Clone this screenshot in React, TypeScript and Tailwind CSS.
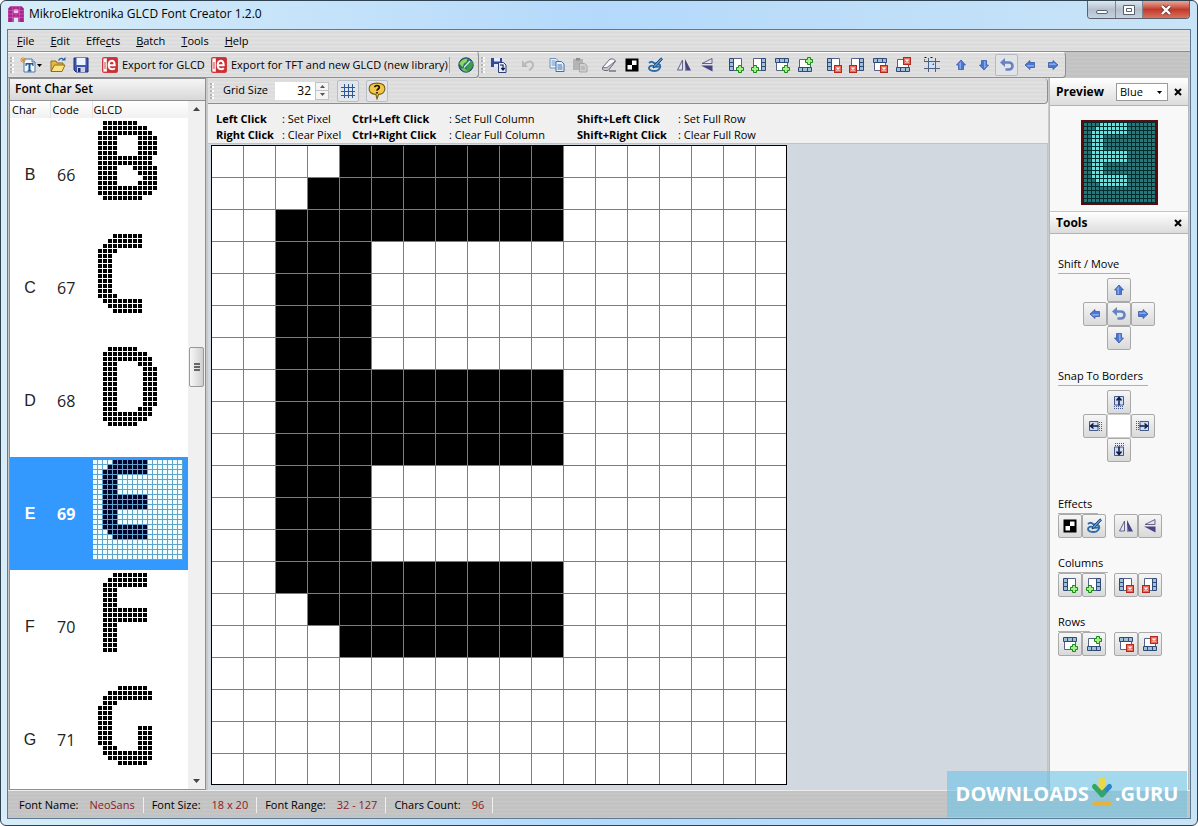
import type { ReactNode } from 'react';
import { useState } from 'react';
import clsx from 'clsx';

type Span = [number, number];
type Glyph = Span[][];

const rep = (n: number, row: Span[]): Glyph => Array.from({ length: n }, () => row);

// each row lists the filled column ranges, inclusive
const glyphB: Glyph = [
  [[2, 8]], [[2, 10]], [[1, 11]],
  ...rep(4, [[1, 4], [9, 12]]),
  ...rep(2, [[1, 11]]),
  [[1, 4], [8, 12]], [[1, 4], [9, 12]], [[1, 4], [10, 12]], [[1, 4], [9, 12]],
  [[1, 12]], [[1, 11]], [[2, 9]],
];
const glyphC: Glyph = [
  [[4, 9]], [[3, 9]], [[2, 9]], [[1, 4]],
  ...rep(8, [[1, 3]]),
  [[1, 4]], [[2, 9]], [[3, 9]], [[4, 9]],
];
const glyphD: Glyph = [
  [[3, 8]], [[2, 10]], [[2, 11]], [[2, 4], [9, 11]],
  ...rep(8, [[2, 4], [10, 12]]),
  [[2, 4], [9, 11]], [[2, 11]], [[2, 10]], [[3, 8]],
];
const glyphE: Glyph = [
  [[4, 10]], [[3, 10]], [[2, 10]],
  ...rep(4, [[2, 4]]),
  ...rep(3, [[2, 10]]),
  ...rep(3, [[2, 4]]),
  [[2, 10]], [[3, 10]], [[4, 10]],
];
const glyphF: Glyph = [
  [[4, 10]], [[3, 10]], [[2, 10]],
  ...rep(4, [[2, 4]]),
  ...rep(3, [[2, 10]]),
  ...rep(6, [[2, 4]]),
];
const glyphG: Glyph = [
  [[5, 10]], [[3, 11]], [[2, 11]], [[2, 4]],
  ...rep(4, [[1, 3]]),
  ...rep(4, [[1, 3], [9, 11]]),
  [[2, 4], [9, 11]], [[2, 11]], [[3, 11]], [[5, 10]],
];

const CHARS = [
  { char: 'B', code: 66, glyph: glyphB },
  { char: 'C', code: 67, glyph: glyphC },
  { char: 'D', code: 68, glyph: glyphD },
  { char: 'E', code: 69, glyph: glyphE },
  { char: 'F', code: 70, glyph: glyphF },
  { char: 'G', code: 71, glyph: glyphG },
];

const COLS = 18;
const ROWS = 20;
const METAL = 'bg-[repeating-linear-gradient(0deg,#e2e2e2_0,#e2e2e2_1px,#dadada_2px,#dedede_4px)]';

function isOn(glyph: Glyph, x: number, y: number) {
  return (glyph[y] ?? []).some(([a, b]) => x >= a && x <= b);
}

function Pixels({ glyph, size, on, off }: { glyph: Glyph; size: number; on: string; off?: string }) {
  const cells: ReactNode[] = [];
  for (let y = 0; y < ROWS; y++) {
    for (let x = 0; x < COLS; x++) {
      const fill = isOn(glyph, x, y) ? on : off;
      if (fill) {
        cells.push(<rect key={`${x}-${y}`} x={x * size} y={y * size} width={size - 1} height={size - 1} fill={fill} />);
      }
    }
  }
  return (
    <svg width={COLS * size} height={ROWS * size} shapeRendering="crispEdges" className="block" aria-hidden="true">
      {cells}
    </svg>
  );
}

function Editor({ glyph }: { glyph: Glyph }) {
  const s = 32;
  return (
    <svg width={COLS * s} height={ROWS * s} shapeRendering="crispEdges" className="block" aria-label="Glyph editor">
      <rect width={COLS * s} height={ROWS * s} fill="#fff" />
      {glyph.map((row, y) =>
        row.map(([a, b]) => <rect key={`${a}-${y}`} x={a * s} y={y * s} width={(b - a + 1) * s + 1} height={s + 1} fill="#000" />),
      )}
      {Array.from({ length: COLS - 1 }, (_, i) => (
        <rect key={`v${i}`} x={(i + 1) * s} y={0} width={1} height={ROWS * s} fill="#7d7d7d" />
      ))}
      {Array.from({ length: ROWS - 1 }, (_, i) => (
        <rect key={`h${i}`} x={0} y={(i + 1) * s} width={COLS * s} height={1} fill="#7d7d7d" />
      ))}
      <rect x={0.5} y={0.5} width={COLS * s - 1} height={ROWS * s - 1} fill="none" stroke="#000" />
    </svg>
  );
}

/* ---------- icons ---------- */

function Icon({ children, size = 16 }: { children: ReactNode; size?: number }) {
  return (
    <svg width={size} height={size} viewBox="0 0 16 16" className="block shrink-0" aria-hidden="true">
      {children}
    </svg>
  );
}

const AppIcon = () => (
  <Icon size={18}>
    <path d="M3 1h10l2 2v12h-5v-4H6v4H1V3z" fill="#a8228c" />
    <path d="M6 4h4v3H6z" fill="#f7c6ea" />
    <path d="M5 1v14M8 1v3M8 7v4M11 1v14M1 5h14M1 8h14M1 11h14" stroke="#d774c0" strokeWidth=".5" />
  </Icon>
);

const NewIcon = () => (
  <Icon>
    <path d="M4 2h8l3 3v10H4z" fill="#f2f7fd" stroke="#5377a6" />
    <path d="M12 2v3h3" fill="#c9dcf2" stroke="#5377a6" />
    <path d="M5.500 6h8v3h-1l-.5-1.500H10.500V13l1 .5v1h-4v-1l1-.5V7.500H7L6.500 9h-1z" fill="#1f5c96" />
    <path d="M3 0v6M0 3h6M1 1l4 4M5 1L1 5" stroke="#e08a2c" strokeWidth=".9" />
  </Icon>
);

const OpenIcon = () => (
  <Icon>
    <path d="M1 14V4h5l1 2h6v3" fill="#e7b93c" stroke="#8f6d12" />
    <path d="M1 14.500L4.500 8H15l-3 6.500z" fill="#fbe387" stroke="#8f6d12" />
    <path d="M8.500 3.500C10 .8 12.500.8 13.500 3" fill="none" stroke="#2d5fa5" strokeWidth="1.400" />
    <path d="M11.500 3.500h4V0z" fill="#2d5fa5" />
  </Icon>
);

const SaveIcon = () => (
  <Icon>
    <path d="M1 1h14v14H3l-2-2z" fill="#3f57b5" stroke="#1d2c70" />
    <rect x="3.500" y="1" width="9" height="7" fill="#eef3fd" />
    <rect x="4" y="10" width="8" height="5" fill="#c9d1e3" />
    <rect x="5" y="11" width="2.500" height="4" fill="#1d2c70" />
  </Icon>
);

// red badge with a light core and a white-on-red "e" mark
const ExportIcon = () => (
  <Icon>
    <rect x=".6" y=".6" width="14.800" height="14.800" rx="1.500" fill="#f6d5d5" stroke="#cf3a3e" strokeWidth="1.200" />
    <path d="M3 2v12" stroke="#fff" strokeWidth="2" />
    <path d="M3 5v7" stroke="#cf3a3e" strokeWidth="1" />
    <path d="M5 1h10v14H5z" fill="#cc2f35" />
    <path d="M6.800 8.300h5.900c0-3-1.200-4.600-2.900-4.600-1.900 0-3.100 1.800-3.100 4.400 0 2.700 1.300 4.200 3.400 4.200 1.100 0 2-.4 2.700-1.200" fill="none" stroke="#fff" strokeWidth="2" />
  </Icon>
);

const GlobeIcon = () => (
  <Icon>
    <circle cx="8" cy="8" r="7.200" fill="#2b6d8f" stroke="#1c4358" />
    <path d="M1.500 7c1-3.500 4.500-5.500 8-5.200L8.500 5 6 6.500 4.500 10z" fill="#8ed65c" />
    <path d="M9.500 8l4.500-4.500c1.500 3 1 6.500-1 8.500l-3 2.500-1.500-2z" fill="#3f9d49" />
    <path d="M3 11.500c2 3 5 3.500 7 3L6.500 11z" fill="#6fc457" />
    <path d="M6 10.500l6-6.500" stroke="#d5f5c5" strokeWidth="1.300" />
  </Icon>
);

const SaveCopyIcon = () => (
  <Icon>
    <path d="M0 1h11v9H0z" fill="#34499a" />
    <path d="M3 1h6v3.500H3zM3 7h5v3H3z" fill="#e4ebfa" />
    <path d="M7.500 5.500h5l2.500 2.500v7.500H7.500z" fill="#e4eefb" stroke="#2b3f78" />
    <path d="M9 8h3v4M10.300 11l1.700 2 1.700-2" fill="none" stroke="#111c44" strokeWidth="1.200" />
  </Icon>
);

const WrapIcon = () => (
  <Icon>
    <path d="M4.500 5.500H10a3.500 3.500 0 010 7H6.500" fill="none" stroke="#6583c0" strokeWidth="2.600" />
    <path d="M1 5.500l5-4.500v9z" fill="#6583c0" />
  </Icon>
);

const UndoIcon = () => (
  <Icon>
    <path d="M5 7c3-4 8-3 8 1 0 3-2 4-4 5" fill="none" stroke="#b9b9b9" strokeWidth="2" />
    <path d="M2 3v7h6z" fill="#b9b9b9" />
  </Icon>
);

const CopyIcon = () => (
  <Icon>
    <path d="M1 1.500h6l2 2V11H1z" fill="#eaf3fd" stroke="#6b91bd" />
    <path d="M2.500 4h4M2.500 6h5M2.500 8h5" stroke="#6b91bd" />
    <path d="M7 4.500h5.500L15 7v7.500H7z" fill="#eaf3fd" stroke="#3f6da5" />
    <path d="M8.500 8h4.500M8.500 10h5M8.500 12h5" stroke="#3f6da5" />
  </Icon>
);

const PasteIcon = () => (
  <Icon>
    <path d="M1 2h10v11H1z" fill="#b4b4b4" />
    <path d="M4 1h4v2.500H4z" fill="#8f8f8f" />
    <path d="M7.500 6.500h5l2.500 2V15H7.500z" fill="#d0d0d0" stroke="#a5a5a5" />
    <path d="M9 10h4M9 12h4" stroke="#a5a5a5" />
  </Icon>
);

const EraserIcon = () => (
  <Icon>
    <path d="M1.500 10.500L9 2h3.500l2 2L8 12.500l-1 1H3l-1.500-1.500z" fill="#f8f8fb" stroke="#6a6a78" />
    <path d="M1.500 10.500H6l8.500-6.500L8 12.500l-1 1H3l-1.500-1.500z" fill="#c3c3d4" stroke="#6a6a78" strokeWidth=".8" />
    <path d="M8 14h7" stroke="#444" />
  </Icon>
);

const InvertIcon = () => (
  <Icon>
    <rect x="1.500" y="1.500" width="13" height="13" fill="#000" />
    <path d="M8 3.500h4.500V8H8zM3.500 8H8v4.500H3.500z" fill="#fff" />
  </Icon>
);

const BrushIcon = () => (
  <Icon>
    <path d="M2 6c2-2 4-1 5 0s5 0 6 2-1 6-5 6-6-1-6-3 3-3 5-2 4 1 5 0" fill="none" stroke="#2d6ba8" strokeWidth="1.900" />
    <path d="M14 .8L15.500 2.200 8.500 10l-2.500 1 .8-2.700z" fill="#5d95cb" stroke="#174a7c" />
  </Icon>
);

const MirrorHIcon = () => (
  <Icon>
    <path d="M6.500 3v10H1.500z" fill="#e2e2ee" stroke="#55567c" strokeWidth=".9" />
    <path d="M9 2v11.500h6z" fill="#474384" />
    <path d="M9 6l1.500 7H9z" fill="#8583b5" />
  </Icon>
);

const MirrorVIcon = () => (
  <Icon>
    <path d="M13 1.500v5H3z" fill="#e2e2ee" stroke="#55567c" strokeWidth=".9" />
    <path d="M13.500 8.500H2l11.500 6z" fill="#474384" />
  </Icon>
);

type Side = 'left' | 'right' | 'top' | 'bottom';

const STRIPS: Record<Side, string> = {
  left: 'M1.500 1.500h4v12h-4zM1.500 5.500h4M1.500 9.500h4',
  right: 'M10.500 1.500h4v12h-4zM10.500 5.500h4M10.500 9.500h4',
  top: 'M1.500 1.500h13v4h-13zM5.500 1.500v4M10.500 1.500v4',
  bottom: 'M1.500 10.500h13v4h-13zM5.500 10.500v4M10.500 10.500v4',
};
const PAGES: Record<Side, string> = {
  left: 'M5.500 1.500h8v12h-8z',
  right: 'M2.500 1.500h8v12h-8z',
  top: 'M2.500 5.500h11v8h-11z',
  bottom: 'M2.500 2.500h11v8h-11z',
};

function StripIcon({ side, remove }: { side: Side; remove?: boolean }) {
  const bx = side === 'right' ? 0 : 8;
  const by = side === 'bottom' ? 0 : 8;
  return (
    <Icon>
      <path d={PAGES[side]} fill="#fff" stroke="#56628a" />
      <path d={STRIPS[side]} fill="#9fc0d8" stroke="#2f4a76" />
      <g transform={`translate(${bx} ${by})`}>
        {remove ? (
          <>
            <rect x=".5" y=".5" width="7" height="7" fill="#ec6a55" stroke="#b5271c" />
            <path d="M2.500 2.500l3 3M5.500 2.500l-3 3" stroke="#fff" strokeWidth="1.300" />
          </>
        ) : (
          <path d="M2.500.5h3v2h2v3h-2v2h-3v-2h-2v-3h2z" fill="#a8ee8c" stroke="#138a13" />
        )}
      </g>
    </Icon>
  );
}

const FrameIcon = () => (
  <Icon>
    <path d="M4.500 1v14M11.500 1v14M0 4.500h16M0 11.500h16" stroke="#4b6184" />
    <rect x="5" y="5" width="6" height="6" fill="#cfe1f6" />
    <path d="M.5.500h2M.5 2.500v1M6.500.500h2" stroke="#111" />
    <path d="M8 8l2-2v2z" fill="#2d5ea8" />
  </Icon>
);

const ROTATE = { up: 0, right: 90, down: 180, left: 270 };

function ArrowIcon({ dir }: { dir: keyof typeof ROTATE }) {
  return (
    <Icon>
      <g transform={`rotate(${ROTATE[dir]} 8 8)`}>
        <path d="M8 3L12.500 8H10.500v4.500h-5V8h-2z" fill="#4a78d6" stroke="#2f4d9c" strokeWidth=".7" />
        <path d="M8 4.300V12H6.500V7.500H5.300z" fill="#86a9ee" />
      </g>
    </Icon>
  );
}

function SnapIcon({ dir }: { dir: keyof typeof ROTATE }) {
  return (
    <Icon>
      <g transform={`rotate(${ROTATE[dir]} 8 8)`}>
        <path d="M3.500 11V2.500h9V11z" fill="#cfdcf1" stroke="#41598c" />
        <path d="M8 3.500v8M5.500 6.500L8 3.500l2.500 3" fill="none" stroke="#10173f" strokeWidth="1.500" />
        <path d="M3 12.500h10M3 14.500h10" stroke="#41598c" strokeDasharray="1 1" />
      </g>
    </Icon>
  );
}

const HelpIcon = () => (
  <Icon size={18}>
    <path d="M8 1c4.500 0 7 2 7 5s-2.500 5-5.500 5L8 15l-1-4C3.500 10.800 1 9 1 6s2.500-5 7-5z" fill="#f1c64a" stroke="#7d5f10" />
    <path d="M6 4.700C6 2.600 10 2.600 10 4.800 10 6.200 8 6.200 8 7.800M8 8.800v1.400" fill="none" stroke="#1b1405" strokeWidth="1.500" />
  </Icon>
);

const GridIcon = () => (
  <Icon>
    <path d="M4.500 1v14M8.500 1v14M12.500 1v14M1 4.500h14M1 8.500h14M1 12.500h14" stroke="#2c5895" />
  </Icon>
);

/* ---------- small parts ---------- */

const Grip = () => <span className="mx-0.5 h-4 w-1 shrink-0 border-x-2 border-dotted border-x-[#b3b3b3] border-r-white" />;

function ToolButton({ label, active, children }: { label: string; active?: boolean; children: ReactNode }) {
  return (
    <button
      type="button"
      aria-label={label}
      className={clsx(
        'flex h-[22px] w-[23px] shrink-0 items-center justify-center rounded-xs',
        active && 'border border-[#b5b9c0] bg-[#e1e3e7]',
      )}
    >
      {children}
    </button>
  );
}

function PanelButton({ label, children }: { label: string; children: ReactNode }) {
  return (
    <button
      type="button"
      aria-label={label}
      className="flex size-6 items-center justify-center rounded-xs border border-[#a9a9a9] bg-linear-to-b from-[#f6f6f6] to-[#d9d9d9]"
    >
      {children}
    </button>
  );
}

function CloseButton({ label }: { label: string }) {
  return (
    <button type="button" aria-label={label} className="flex size-3 items-center justify-center">
      <svg width="8" height="8" viewBox="0 0 8 8" aria-hidden="true">
        <path d="M1 1l6 6M7 1L1 7" stroke="#000" strokeWidth="2" />
      </svg>
    </button>
  );
}

function Section({ title, width, children }: { title: string; width: string; children: ReactNode }) {
  return (
    <section>
      <h3 className={clsx('h-[18px] border-b border-[#b0b0b0] leading-4', width)}>{title}</h3>
      {children}
    </section>
  );
}

const MENU: [string, string, string][] = [
  ['', 'F', 'ile'],
  ['', 'E', 'dit'],
  ['Effe', 'c', 'ts'],
  ['', 'B', 'atch'],
  ['', 'T', 'ools'],
  ['', 'H', 'elp'],
];

const HINTS = [
  ['Left Click', ': Set Pixel', 'Ctrl+Left Click', ': Set Full Column', 'Shift+Left Click', ': Set Full Row'],
  ['Right Click', ': Clear Pixel', 'Ctrl+Right Click', ': Clear Full Column', 'Shift+Right Click', ': Clear Full Row'],
];

const STATUS = [
  ['Font Name:', 'NeoSans'],
  ['Font Size:', '18 x 20'],
  ['Font Range:', '32 - 127'],
  ['Chars Count:', '96'],
];

const Gap = () => <span className="w-1.5 shrink-0" />;

function TitleBar() {
  return (
    <header className="flex h-7 shrink-0 items-start justify-between">
      <div className="flex h-[26px] items-center gap-1 text-xs">
        <AppIcon />
        <h1>MikroElektronika GLCD Font Creator 1.2.0</h1>
      </div>
      <div className="mr-px flex h-[18px] overflow-hidden rounded-b border border-t-0 border-[#59616e]">
        <button type="button" aria-label="Minimize" className="flex w-7 items-center justify-center border-r border-[#7c8795] bg-linear-to-b from-[#dfe7ef] via-[#b3bfcd] to-[#c6d2de]">
          <span className="mt-1 h-1 w-3 rounded-xs border border-[#56606e] bg-white" />
        </button>
        <button type="button" aria-label="Maximize" className="flex w-[27px] items-center justify-center border-r border-[#7c8795] bg-linear-to-b from-[#dfe7ef] via-[#b3bfcd] to-[#c6d2de]">
          <svg width="12" height="10" viewBox="0 0 12 10" aria-hidden="true">
            <path d="M.5.500h11v9H.5zM3.500 3.500h5v3h-5z" fill="#fff" stroke="#56606e" />
          </svg>
        </button>
        <button type="button" aria-label="Close" className="flex w-[46px] items-center justify-center bg-linear-to-b from-[#e5a79b] via-[#c2392a] to-[#d9705c]">
          <svg width="12" height="10" viewBox="0 0 12 10" aria-hidden="true">
            <path d="M2 1l8 8M10 1L2 9" stroke="#6d3a3a" strokeWidth="4" />
            <path d="M2 1l8 8M10 1L2 9" stroke="#fff" strokeWidth="2.400" />
          </svg>
        </button>
      </div>
    </header>
  );
}

function Toolbar() {
  return (
    <div className="flex h-[26px] shrink-0 bg-[repeating-linear-gradient(0deg,#c9c9c9_0,#c1c1c1_2px,#c6c6c6_4px)]">
      <div className={clsx('flex items-center rounded-r-sm border border-l-0 border-[#8d8d8d] border-t-white pr-px', METAL)}>
        <Grip />
        <button type="button" aria-label="New" className="ml-1 flex h-[22px] w-[26px] items-center gap-px">
          <NewIcon />
          <svg width="5" height="3" viewBox="0 0 5 3" aria-hidden="true"><path d="M0 0h5L2.500 3z" /></svg>
        </button>
        <ToolButton label="Open"><OpenIcon /></ToolButton>
        <ToolButton label="Save"><SaveIcon /></ToolButton>
        <Gap />
        <button type="button" className="flex h-[22px] w-[109px] items-center gap-1 pl-1 whitespace-nowrap"><ExportIcon />Export for GLCD</button>
        <button type="button" className="flex h-[22px] w-[242px] items-center gap-1 pl-1 whitespace-nowrap"><ExportIcon />Export for TFT and new GLCD (new library)</button>
        <span className="mr-1 h-4 w-px bg-[#a5a5a5]" />
        <ToolButton label="Web site"><GlobeIcon /></ToolButton>
      </div>
      <div className={clsx('flex items-center rounded-r-sm border border-l-0 border-[#8d8d8d] border-t-white pr-px', METAL)}>
        <Grip />
        <ToolButton label="Save character"><SaveCopyIcon /></ToolButton>
        <Gap />
        <ToolButton label="Undo"><UndoIcon /></ToolButton>
        <Gap />
        <ToolButton label="Copy"><CopyIcon /></ToolButton>
        <ToolButton label="Paste"><PasteIcon /></ToolButton>
        <Gap />
        <ToolButton label="Erase"><EraserIcon /></ToolButton>
        <ToolButton label="Invert"><InvertIcon /></ToolButton>
        <ToolButton label="Brush"><BrushIcon /></ToolButton>
        <Gap />
        <ToolButton label="Mirror horizontally"><MirrorHIcon /></ToolButton>
        <ToolButton label="Mirror vertically"><MirrorVIcon /></ToolButton>
        <Gap />
        <ToolButton label="Add column left"><StripIcon side="left" /></ToolButton>
        <ToolButton label="Add column right"><StripIcon side="right" /></ToolButton>
        <ToolButton label="Add row top"><StripIcon side="top" /></ToolButton>
        <ToolButton label="Add row bottom"><StripIcon side="bottom" /></ToolButton>
        <Gap />
        <ToolButton label="Delete left column"><StripIcon side="left" remove /></ToolButton>
        <ToolButton label="Delete right column"><StripIcon side="right" remove /></ToolButton>
        <ToolButton label="Delete top row"><StripIcon side="top" remove /></ToolButton>
        <ToolButton label="Delete bottom row"><StripIcon side="bottom" remove /></ToolButton>
        <Gap />
        <ToolButton label="Crop"><FrameIcon /></ToolButton>
        <Gap />
        <ToolButton label="Shift up"><ArrowIcon dir="up" /></ToolButton>
        <ToolButton label="Shift down"><ArrowIcon dir="down" /></ToolButton>
        <ToolButton label="Wrap around" active><WrapIcon /></ToolButton>
        <ToolButton label="Shift left"><ArrowIcon dir="left" /></ToolButton>
        <ToolButton label="Shift right"><ArrowIcon dir="right" /></ToolButton>
      </div>
    </div>
  );
}

function CharList({ selected, onSelect }: { selected: number; onSelect: (code: number) => void }) {
  return (
    <aside className="flex w-[197px] shrink-0 flex-col border border-[#8f8f8f] bg-white">
      <h2 className="h-[22px] shrink-0 border-b border-[#8f8f8f] bg-linear-to-b from-[#f5f5f5] to-[#d8d8d8] pl-[5px] text-xs leading-5 font-semibold">
        Font Char Set
      </h2>
      <div className="flex min-h-0 flex-1">
        <div className="min-w-0 flex-1 overflow-hidden">
          <table className="w-full table-fixed border-collapse">
            <thead>
              <tr className="h-[17px] bg-linear-to-b from-white to-[#f1f1f1] text-left leading-4">
                <th className="w-10 border-r border-[#e3e3e3] pl-0.5 font-normal">Char</th>
                <th className="w-[42px] border-r border-[#e3e3e3] pl-0.5 font-normal">Code</th>
                <th className="pl-px font-normal">GLCD</th>
              </tr>
            </thead>
            <tbody>
              {CHARS.map(({ char, code, glyph }) => {
                const active = code === selected;
                return (
                  <tr
                    key={code}
                    onClick={() => onSelect(code)}
                    className={clsx('h-[113px] cursor-default text-base', active ? 'bg-[#3399ff] font-bold text-white' : 'text-[#222]')}
                  >
                    <td className="text-center font-['Liberation_Sans',sans-serif]">{char}</td>
                    <td className="pl-[7px]">{code}</td>
                    <td className="pt-[3px] pl-px align-top">
                      <div className={clsx('w-[90px]', active && 'bg-[#5fa3c9]')}>
                        <Pixels glyph={glyph} size={5} on={active ? '#00062e' : '#000'} off={active ? '#effdff' : undefined} />
                      </div>
                    </td>
                  </tr>
                );
              })}
            </tbody>
          </table>
        </div>
        <div className="flex w-[17px] shrink-0 flex-col items-center justify-between bg-[#f0f0f0] py-1.5" aria-hidden="true">
          <svg width="7" height="4" viewBox="0 0 7 4"><path d="M0 4h7L3.500 0z" fill="#444" /></svg>
          <div className="flex w-full flex-1 flex-col items-center">
            <div className="flex-9" />
            <div className="flex h-10 w-[15px] flex-col items-center justify-center gap-px rounded-xs border border-[#989898] bg-linear-to-r from-[#f7f7f7] to-[#cfcfcf]">
              <span className="h-0.5 w-1.5 bg-[#666]" />
              <span className="h-0.5 w-1.5 bg-[#666]" />
              <span className="h-0.5 w-1.5 bg-[#666]" />
            </div>
            <div className="flex-15" />
          </div>
          <svg width="7" height="4" viewBox="0 0 7 4"><path d="M0 0h7L3.500 4z" fill="#444" /></svg>
        </div>
      </div>
    </aside>
  );
}

function Workspace({ glyph }: { glyph: Glyph }) {
  return (
    <main className="ml-0.5 flex min-w-0 flex-1 flex-col bg-[#f0f0f0]">
      <div className={clsx('flex h-[26px] shrink-0 items-center rounded-r-sm border-r border-b border-[#8d8d8d]', METAL)}>
        <Grip />
        <label htmlFor="grid-size" className="mx-[7px]">Grid Size</label>
        <input
          id="grid-size"
          type="text"
          inputMode="numeric"
          defaultValue="32"
          className="h-[18px] w-10 bg-white pr-1 text-right text-xs outline-none"
        />
        <div className="flex h-[18px] w-3.5 flex-col border border-[#c3c3c3] bg-[#f4f4f4]">
          <button type="button" aria-label="Increase grid size" className="flex flex-1 items-center justify-center border-b border-[#c3c3c3]">
            <svg width="5" height="3" viewBox="0 0 5 3" aria-hidden="true"><path d="M0 3h5L2.500 0z" fill="#555" /></svg>
          </button>
          <button type="button" aria-label="Decrease grid size" className="flex flex-1 items-center justify-center">
            <svg width="5" height="3" viewBox="0 0 5 3" aria-hidden="true"><path d="M0 0h5L2.500 3z" fill="#555" /></svg>
          </button>
        </div>
        <button type="button" aria-label="Show grid" className="ml-2 flex size-[22px] items-center justify-center rounded-xs border border-[#b9bdc4] bg-[#e3e5e9]"><GridIcon /></button>
        <button type="button" aria-label="Help" className="ml-[7px] flex size-[22px] items-center justify-center rounded-xs border border-[#b9bdc4] bg-[#e3e5e9]"><HelpIcon /></button>
      </div>
      <div className="grid shrink-0 grid-cols-[66px_70px_97px_128px_101px_1fr] pt-[7px] pl-2 leading-4 whitespace-nowrap">
        {HINTS.map((row) =>
          row.map((text, i) => (
            <span key={text} className={i % 2 === 0 ? 'font-bold' : ''}>{text}</span>
          )),
        )}
      </div>
      <div className="min-h-0 flex-1 overflow-hidden border-t border-r border-[#c2c2c2] bg-[#d1d8e0] pt-px pl-[3px]">
        <Editor glyph={glyph} />
      </div>
    </main>
  );
}

function SidePanel({ glyph }: { glyph: Glyph }) {
  return (
    <aside className="ml-px w-[140px] shrink-0 border-r border-l border-[#b8b8b8] bg-[#f8f8f8]">
      <div className="flex h-7 items-center border-b border-[#b3b3b3] bg-linear-to-b from-white to-[#dcdcdc] pt-px pr-1 pl-1.5">
        <h2 className="flex-1 text-xs font-bold">Preview</h2>
        <div className="relative mr-1 flex items-center">
          <select aria-label="Preview colour" className="h-[18px] w-[52px] appearance-none border border-[#9b9b9b] bg-white pl-[3px] leading-4 outline-none">
            <option>Blue</option>
          </select>
          <svg width="5" height="3" viewBox="0 0 5 3" className="pointer-events-none absolute right-1.5" aria-hidden="true"><path d="M0 0h5L2.500 3z" /></svg>
        </div>
        <CloseButton label="Close preview" />
      </div>
      <div className="flex h-[106px] items-end justify-center border-b border-[#c4c4c4] pb-1.5">
        <div className="border-2 border-[#5a0d10] bg-[#042c2c] pt-px pl-px">
          <Pixels glyph={glyph} size={4} on="#5fe6e2" off="#22787a" />
        </div>
      </div>
      <div className="flex h-[22px] items-center justify-between border-b border-[#b3b3b3] bg-linear-to-b from-white to-[#dcdcdc] pr-1 pl-1.5">
        <h2 className="text-xs font-bold">Tools</h2>
        <CloseButton label="Close tools" />
      </div>
      <div className="px-2 pt-[22px]">
        <Section title="Shift / Move" width="w-[72px]">
          <div className="mx-auto mt-1 mb-[18px] grid w-[72px] grid-cols-3">
            <div className="col-start-2"><PanelButton label="Move up"><ArrowIcon dir="up" /></PanelButton></div>
            <div className="col-start-1"><PanelButton label="Move left"><ArrowIcon dir="left" /></PanelButton></div>
            <PanelButton label="Wrap"><WrapIcon /></PanelButton>
            <PanelButton label="Move right"><ArrowIcon dir="right" /></PanelButton>
            <div className="col-start-2"><PanelButton label="Move down"><ArrowIcon dir="down" /></PanelButton></div>
          </div>
        </Section>
        <Section title="Snap To Borders" width="w-[90px]">
          <div className="mx-auto mt-1 mb-[34px] grid w-[72px] grid-cols-3">
            <div className="col-start-2"><PanelButton label="Snap top"><SnapIcon dir="up" /></PanelButton></div>
            <div className="col-start-1"><PanelButton label="Snap left"><SnapIcon dir="left" /></PanelButton></div>
            <div className="col-start-2 row-start-2 border border-[#cfcfcf] bg-white" />
            <div className="col-start-3 row-start-2"><PanelButton label="Snap right"><SnapIcon dir="right" /></PanelButton></div>
            <div className="col-start-2"><PanelButton label="Snap bottom"><SnapIcon dir="down" /></PanelButton></div>
          </div>
        </Section>
        <div className="flex flex-col gap-[17px]">
          <Section title="Effects" width="w-10">
            <div className="flex">
              <PanelButton label="Invert glyph"><InvertIcon /></PanelButton>
              <PanelButton label="Paint"><BrushIcon /></PanelButton>
              <span className="w-2" />
              <PanelButton label="Flip horizontally"><MirrorHIcon /></PanelButton>
              <PanelButton label="Flip vertically"><MirrorVIcon /></PanelButton>
            </div>
          </Section>
          <Section title="Columns" width="w-[50px]">
            <div className="flex">
              <PanelButton label="Insert column left"><StripIcon side="left" /></PanelButton>
              <PanelButton label="Insert column right"><StripIcon side="right" /></PanelButton>
              <span className="w-2" />
              <PanelButton label="Remove column left"><StripIcon side="left" remove /></PanelButton>
              <PanelButton label="Remove column right"><StripIcon side="right" remove /></PanelButton>
            </div>
          </Section>
          <Section title="Rows" width="w-8">
            <div className="flex">
              <PanelButton label="Insert row top"><StripIcon side="top" /></PanelButton>
              <PanelButton label="Insert row bottom"><StripIcon side="bottom" /></PanelButton>
              <span className="w-2" />
              <PanelButton label="Remove row top"><StripIcon side="top" remove /></PanelButton>
              <PanelButton label="Remove row bottom"><StripIcon side="bottom" remove /></PanelButton>
            </div>
          </Section>
        </div>
      </div>
    </aside>
  );
}

function Watermark() {
  return (
    <div className="absolute right-2.5 bottom-2 flex h-[46px] w-60 items-center justify-center bg-[#6cc3e6]/60 text-xl font-bold text-white">
      <span>DOWNLOADS</span>
      <svg width="24" height="30" viewBox="0 0 24 30" className="mx-px mb-1 shrink-0" aria-hidden="true">
        <path d="M12 3.500v11" stroke="#e9d84a" strokeWidth="7" strokeLinecap="round" />
        <path d="M4.500 9.500l7.500 8" stroke="#35a564" strokeWidth="5" strokeLinecap="round" />
        <path d="M19.500 9.500l-7.500 8" stroke="#2f83c6" strokeWidth="5" strokeLinecap="round" />
        <path d="M12 17.500l2-2" stroke="#35a564" strokeWidth="5" strokeLinecap="round" />
        <path d="M5 26.500h14" stroke="#e7b23a" strokeWidth="5" strokeLinecap="round" />
      </svg>
      <span>.GURU</span>
    </div>
  );
}

export default function App() {
  const [selected, setSelected] = useState(69);
  const glyph = CHARS.find((c) => c.code === selected)?.glyph ?? glyphE;

  return (
    <div className="relative flex h-screen flex-col overflow-hidden rounded-md border border-[#2f4252] bg-linear-to-r from-[#d8edf8] via-[#b4d9fb] to-[#c9e4f6] px-1.5 pb-1.5 font-['Open_Sans',sans-serif] text-[11px] text-black">
      <TitleBar />
      <div className="flex min-h-0 flex-1 flex-col border border-[#5b7a94] bg-[#c9c9c9]">
        <nav className={clsx('flex h-[22px] shrink-0 items-center gap-4 border-b border-[#8d8d8d] pt-px pl-[9px]', METAL)}>
          {MENU.map(([pre, key, post]) => (
            <button type="button" key={key + post}>
              {pre}<span className="underline">{key}</span>{post}
            </button>
          ))}
        </nav>
        <Toolbar />
        <div className="flex min-h-0 flex-1 px-px">
          <CharList selected={selected} onSelect={setSelected} />
          <Workspace glyph={glyph} />
          <SidePanel glyph={glyph} />
        </div>
        <footer className="flex h-7 shrink-0 items-center border-t border-[#eee] bg-[repeating-linear-gradient(0deg,#c9c9c9_0,#c1c1c1_2px,#c6c6c6_4px)] pl-[3px]">
          {STATUS.map(([label, value]) => (
            <div key={label} className="flex items-center border-r border-[#efefef] px-2 leading-4">
              <span className="mr-[11px]">{label}</span>
              <span className="text-[#8b1a20]">{value}</span>
            </div>
          ))}
        </footer>
      </div>
      <Watermark />
    </div>
  );
}
